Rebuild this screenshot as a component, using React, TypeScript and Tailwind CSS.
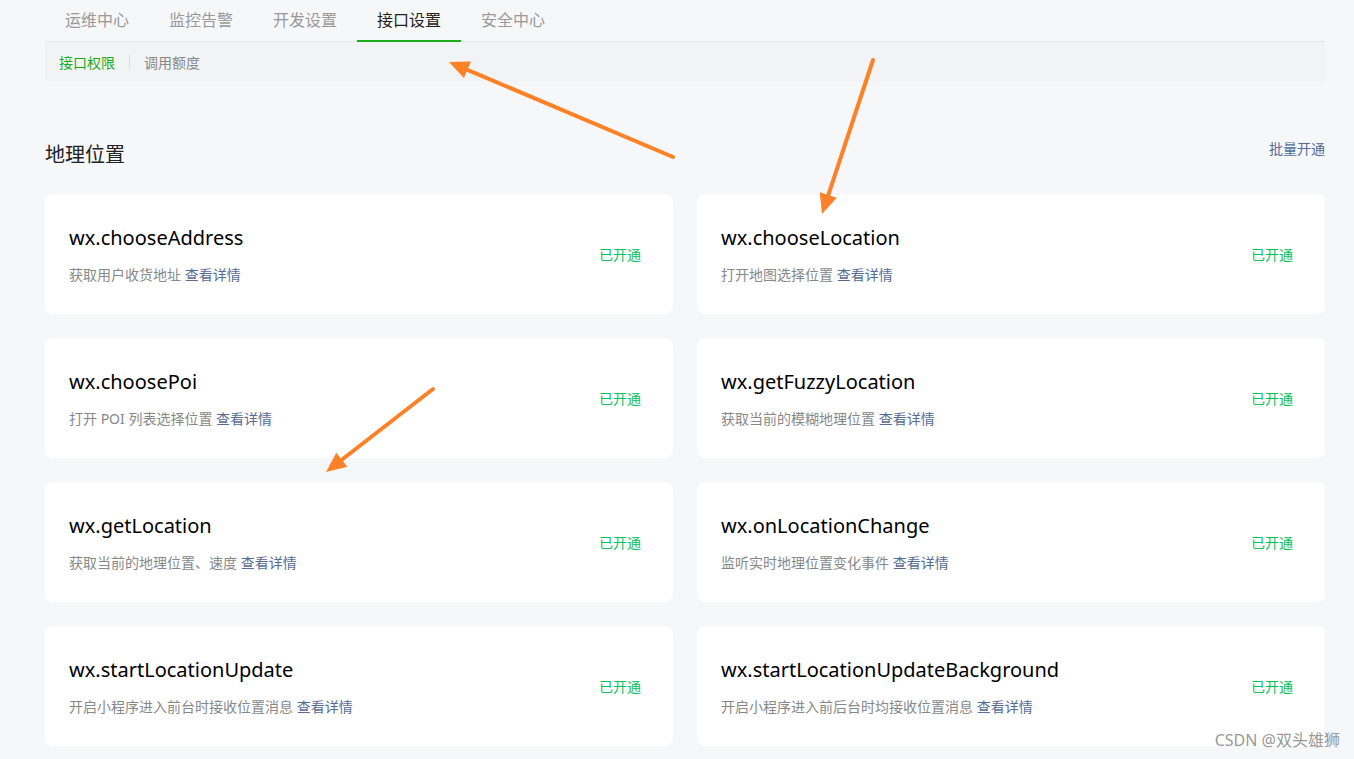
import React from 'react';

const tabs = ['运维中心', '监控告警', '开发设置', '接口设置', '安全中心'];

const apis = [
  { name: 'wx.chooseAddress', desc: '获取用户收货地址' },
  { name: 'wx.chooseLocation', desc: '打开地图选择位置' },
  { name: 'wx.choosePoi', desc: '打开 POI 列表选择位置' },
  { name: 'wx.getFuzzyLocation', desc: '获取当前的模糊地理位置' },
  { name: 'wx.getLocation', desc: '获取当前的地理位置、速度' },
  { name: 'wx.onLocationChange', desc: '监听实时地理位置变化事件' },
  { name: 'wx.startLocationUpdate', desc: '开启小程序进入前台时接收位置消息' },
  { name: 'wx.startLocationUpdateBackground', desc: '开启小程序进入前后台时均接收位置消息' },
];

const font = { fontFamily: '"Noto Sans", "Noto Sans CJK SC", sans-serif' };

const Arrow: React.FC<{ x1: number; y1: number; x2: number; y2: number }> = ({ x1, y1, x2, y2 }) => {
  const a = Math.atan2(y2 - y1, x2 - x1);
  const len = 20;
  const w = 9;
  const bx = x2 - Math.cos(a) * len;
  const by = y2 - Math.sin(a) * len;
  const p1 = `${bx + Math.sin(a) * w},${by - Math.cos(a) * w}`;
  const p2 = `${bx - Math.sin(a) * w},${by + Math.cos(a) * w}`;
  return (
    <g>
      <line x1={x1} y1={y1} x2={bx} y2={by} stroke="#fd8127" strokeWidth={4} strokeLinecap="round" />
      <polygon points={`${x2},${y2} ${p1} ${p2}`} fill="#fd8127" />
    </g>
  );
};

export default function App() {
  return (
    <div className="relative w-[1354px] h-[759px] overflow-hidden bg-[#f6f7f9]" style={font}>
      <div className="pl-[45px] pr-[29px]">
        {/* top tabs */}
        <div className="flex h-[42px] border-b border-[#e4e6eb]">
          {tabs.map((t, i) => (
            <div
              key={t}
              className={`relative px-5 pt-[9px] text-[16px] leading-[22px] ${
                i === 3 ? 'text-[#222]' : 'text-[#999]'
              }`}
            >
              {t}
              {i === 3 && <div className="absolute left-0 right-0 bottom-[-1px] h-[2px] bg-[#1aad19]" />}
            </div>
          ))}
        </div>

        {/* sub nav */}
        <div className="flex items-center h-10 bg-[#f2f3f5] px-[14px] text-[14px]">
          <span className="text-[#1aad19]">接口权限</span>
          <span className="mx-[14px] h-[14px] w-px bg-[#dcdee2]" />
          <span className="text-[#888]">调用额度</span>
        </div>

        {/* section header */}
        <div className="flex justify-between items-start mt-[57px] mb-[25px]">
          <h2 className="text-[20px] leading-7 text-[#222] mt-[2px]">地理位置</h2>
          <a className="text-[14px] leading-5 text-[#576b95]">批量开通</a>
        </div>

        {/* cards */}
        <div className="grid grid-cols-2 gap-6">
          {apis.map((api) => (
            <div key={api.name} className="flex items-center justify-between h-[120px] bg-white rounded-[8px] pl-6 pr-8">
              <div>
                <div className="text-[20px] leading-7 text-black">{api.name}</div>
                <div className="mt-[13px] text-[14px] leading-5 text-[#888]">
                  {api.desc} <a className="text-[#576b95]">查看详情</a>
                </div>
              </div>
              <span className="text-[14px] text-[#07c160]">已开通</span>
            </div>
          ))}
        </div>
      </div>

      {/* annotation arrows */}
      <svg className="absolute inset-0 pointer-events-none" width={1354} height={759}>
        <Arrow x1={673} y1={157} x2={449} y2={62} />
        <Arrow x1={873} y1={60} x2={822} y2={214} />
        <Arrow x1={433} y1={389} x2={326} y2={472} />
      </svg>

      <div className="absolute right-[14px] bottom-[7px] text-[16px] text-[#999]">CSDN @双头雄狮</div>
    </div>
  );
}
